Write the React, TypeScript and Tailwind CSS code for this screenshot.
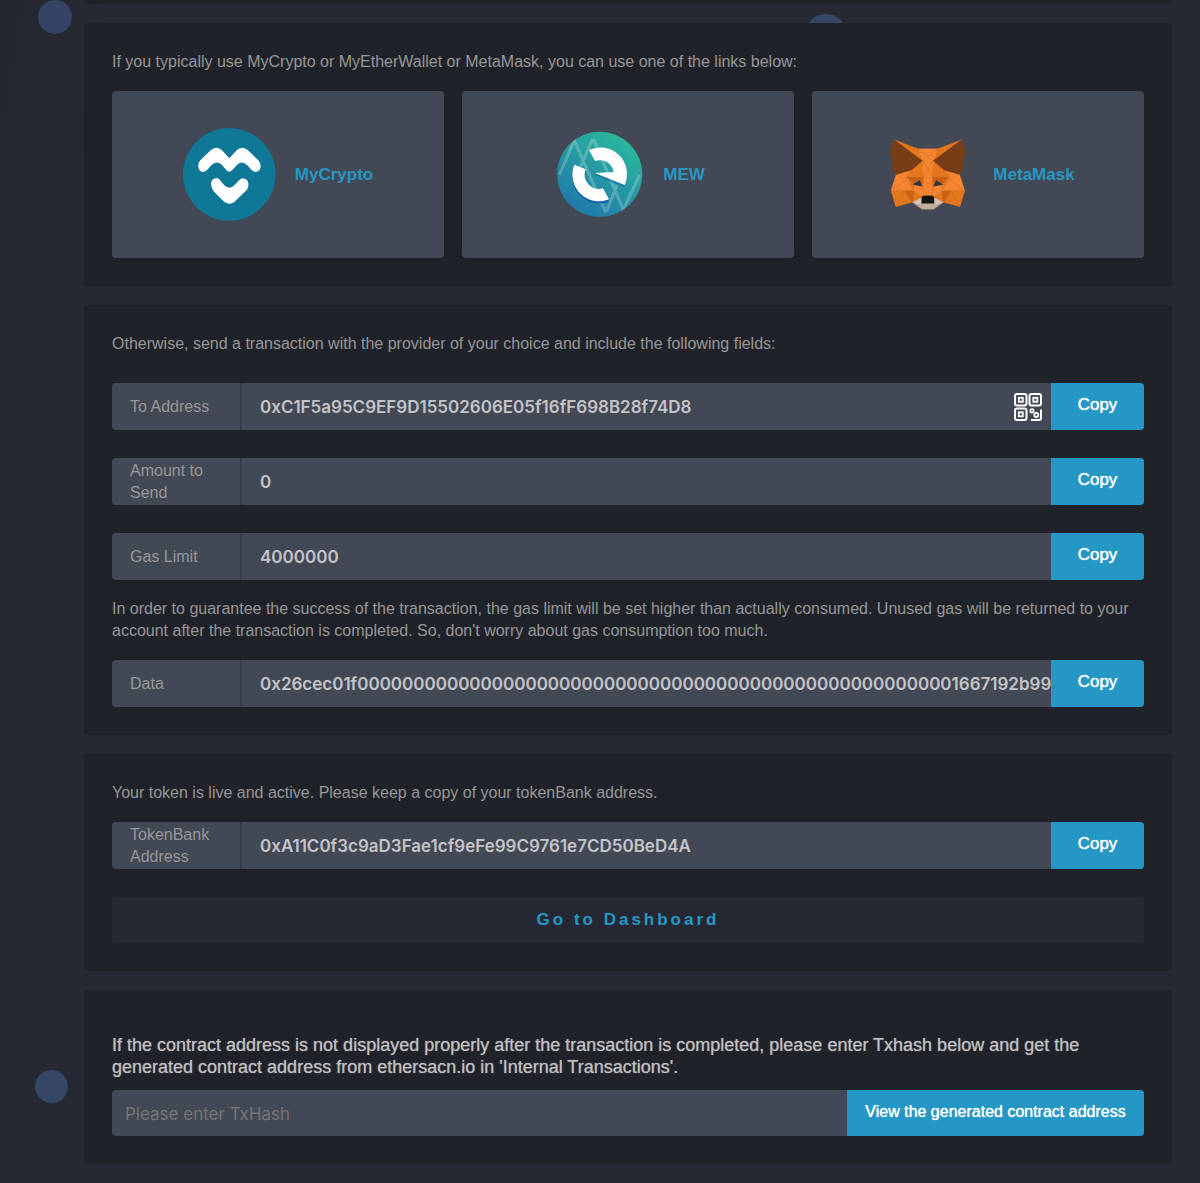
import React from "react";

const TEXT = "text-[16px] leading-[22px] text-[#979797]";

function Card({ children, className = "px-7 py-7" }: { children?: React.ReactNode; className?: string }) {
  return <section className={`relative rounded bg-[#1f2229] ${className}`}>{children}</section>;
}

function MyCryptoLogo() {
  return (
    <svg className="size-[93px] shrink-0" viewBox="61 55 279 279" aria-hidden="true">
      <circle cx="200" cy="194" r="139" fill="#0e7896" />
      <path
        fill="#fff"
        d="M107 170Q106 160 113 152L144 122Q161 107 178 122L200 146L222 122Q239 107 256 122L287 152Q294 160 294 170C293 189 275 190 267 181L254 167Q239 152 225 164L209 181Q200 192 191 181L176 164Q161 152 146 167L133 181C122 192 107 186 107 170Z"
      />
      <path
        fill="#fff"
        d="M145 220C148 204 164 203 171 210L184 226Q200 242 216 226L230 211C240 202 256 207 257 222Q258 236 249 244L215 277Q200 288 185 277L152 244Q145 234 145 220Z"
      />
    </svg>
  );
}

function MewLogo() {
  const top = "M147 121A80 80 0 0 1 254 226L165 190L221 187A42 42 0 0 0 165 154Z";
  const bottom = "M103 165A80 80 0 0 0 207 269L189 236A43 43 0 0 1 137 179Z";
  return (
    <svg className="size-[93px] shrink-0" viewBox="33 55 279 279" aria-hidden="true">
      <defs>
        <linearGradient id="mewFill" x1="0.2" y1="0.95" x2="0.75" y2="0.1">
          <stop offset="0" stopColor="#2276ac" />
          <stop offset="1" stopColor="#29b59c" />
        </linearGradient>
        <clipPath id="mewClip">
          <circle cx="179" cy="194" r="128" />
        </clipPath>
      </defs>
      <circle cx="179" cy="194" r="128" fill="url(#mewFill)" />
      <g clipPath="url(#mewClip)">
        <path
          d="M58 196L103 92L195 303H200L232 225M120 175L156 92H162L250 300L299 196"
          fill="none"
          stroke="#fff"
          strokeOpacity="0.22"
          strokeWidth="9"
        />
      </g>
      <path d={bottom} fill="#1d62ab" transform="translate(0 7)" />
      <path d="M165 190L254 226L250 233L165 196Z" fill="#1d62ab" fillOpacity="0.5" />
      <path d={top} fill="#fff" />
      <path d={bottom} fill="#fff" />
    </svg>
  );
}

const FOX: [string, string[]][] = [
  ["#e2761b", ["274.1,35.5 174.6,109.4 193,65.8"]],
  [
    "#e4761b",
    [
      "44.4,35.5 143.1,110.1 125.6,65.8",
      "238.3,206.8 211.8,247.4 268.5,263 284.8,207.7",
      "33.9,207.7 50.1,263 106.8,247.4 80.3,206.8",
      "103.6,138.2 87.8,162.1 144.1,164.6 142.1,104.1",
      "214.9,138.2 175.9,103.4 174.6,164.6 230.8,162.1",
      "106.8,247.4 140.6,230.9 111.4,208.1",
      "177.9,230.9 211.8,247.4 207.1,208.1",
    ],
  ],
  [
    "#d7c1b3",
    [
      "211.8,247.4 177.9,230.9 180.6,253 180.3,262.3",
      "106.8,247.4 138.3,262.3 138.1,253 140.6,230.9",
    ],
  ],
  [
    "#cd6116",
    [
      "106.8,247.4 111.6,206.8 80.3,207.7",
      "207,206.8 211.8,247.4 238.3,207.7",
      "230.8,162.1 174.6,164.6 179.8,193.5 188.1,176.1 208.1,185.2",
      "110.6,185.2 130.6,176.1 138.8,193.5 144.1,164.6 87.8,162.1",
    ],
  ],
  [
    "#e4751f",
    [
      "87.8,162.1 111.4,208.1 110.6,185.2",
      "208.1,185.2 207.1,208.1 230.8,162.1",
      "144.1,164.6 138.8,193.5 145.4,227.6 146.9,182.7",
      "174.6,164.6 171.9,182.6 173.1,227.6 179.8,193.5",
    ],
  ],
  [
    "#f58530",
    [
      "179.8,193.5 173.1,227.6 177.9,230.9 207.1,208.1 208.1,185.2",
      "110.6,185.2 111.4,208.1 140.6,230.9 145.4,227.6 138.8,193.5",
      "267.2,153.5 214.9,138.2 230.8,162.1 207.1,208.1 238.3,207.7 284.8,207.7",
      "103.6,138.2 51.3,153.5 33.9,207.7 80.3,207.7 111.4,208.1 87.8,162.1",
      "174.6,164.6 177.9,106.9 193.1,65.8 125.6,65.8 140.6,106.9 144.1,164.6 145.3,182.8 145.4,227.6 173.1,227.6 173.3,182.8",
    ],
  ],
  [
    "#c0ad9e",
    [
      "180.3,262.3 180.6,253 178.1,250.8 140.4,250.8 138.1,253 138.3,262.3 106.8,247.4 117.8,256.4 140.1,271.9 178.4,271.9 200.8,256.4 211.8,247.4",
    ],
  ],
  ["#161616", ["179.9,229 173.1,226 145.4,226 138.6,229 138.1,251 180.6,251"]],
  [
    "#763d16",
    [
      "278.3,114.2 286.8,73.4 274.1,35.5 177.9,106.9 214.9,138.2 267.2,153.5 278.8,140 273.8,136.4 281.8,129.1 275.6,124.3 283.6,118.2",
      "31.8,73.4 40.3,114.2 34.9,118.2 42.9,124.3 36.8,129.1 44.8,136.4 39.8,140 51.3,153.5 103.6,138.2 140.6,106.9 44.4,35.5",
    ],
  ],
  [
    "#233447",
    ["138.8,193.5 108.6,187.2 131.5,174.1", "179.7,193.5 187,174.1 210,187.2"],
  ],
];

const FOX_FACETS =
  "M33.9 207.7L86 172L111 208M86 172L90 143M86 172L51 154M284.8 207.7L232 172L207 208M232 172L228 143M232 172L267 154M50 263L80 207M268 263L238 207M143 107L159 130L175 107M159 130L144 165M159 130L175 165M126 66L175 107M193 66L143 107M144 165H175M147 183H172M32 73L88 76L103 138M88 76L40 114M287 73L230 76L215 138M230 76L278 114";

function MetaMaskLogo() {
  return (
    <svg className="size-[93px] shrink-0" viewBox="0 -4.5 316 316" aria-hidden="true">
      {FOX.map(([fill, shapes]) =>
        shapes.map((points) => (
          <polygon key={points} points={points} fill={fill} stroke={fill} strokeWidth="1" strokeLinejoin="round" />
        )),
      )}
      <path d={FOX_FACETS} fill="none" stroke="#8a4510" strokeOpacity="0.3" strokeWidth="2" />
    </svg>
  );
}

function QrIcon() {
  return (
    <svg className="size-7" viewBox="0 0 28 28" fill="none" stroke="#fff" strokeWidth="2" aria-hidden="true">
      <rect x="1" y="1" width="11.5" height="11.5" rx="2" />
      <rect x="15.5" y="1" width="11.5" height="11.5" rx="2" />
      <rect x="1" y="15.5" width="11.5" height="11.5" rx="2" />
      <rect x="4.8" y="4.8" width="4" height="4" strokeWidth="1.8" />
      <rect x="19.3" y="4.8" width="4" height="4" strokeWidth="1.8" />
      <rect x="4.8" y="19.3" width="4" height="4" strokeWidth="1.8" />
      <circle cx="18" cy="17.8" r="1.7" strokeWidth="1.7" />
      <circle cx="22.3" cy="22" r="2" strokeWidth="1.8" />
      <path d="M27 16.5V25Q27 27 25 27H17" />
    </svg>
  );
}

function WalletLink({ name, logo }: { name: string; logo: React.ReactNode }) {
  return (
    <a
      href="#"
      className="flex h-[167px] flex-1 items-center justify-center gap-[19px] rounded bg-[#434855] text-[17px] font-bold text-[#2597c4]"
    >
      {logo}
      {name}
    </a>
  );
}

function Field({ id, label, value, qr }: { id: string; label: string; value: string; qr?: boolean }) {
  return (
    <div className="flex h-[47px] overflow-hidden rounded bg-[#434855]">
      <label
        htmlFor={id}
        className="flex w-[130px] shrink-0 items-center border-r-2 border-[#383c48] pr-4 pl-[18px] text-[16px] leading-[22px] text-[#979797]"
      >
        {label}
      </label>
      <input
        id={id}
        readOnly
        value={value}
        className="min-w-0 flex-1 bg-transparent pt-0.5 pl-[18px] font-['Inter'] text-[17px] font-semibold text-[#c3c4c8] outline-none"
      />
      {qr && (
        <button type="button" aria-label="Show QR code" className="mr-[9px] shrink-0">
          <QrIcon />
        </button>
      )}
      <button
        type="button"
        className="w-[93px] shrink-0 bg-[#2597c4] pb-1 text-[17px] text-white [text-shadow:0_0_1px_#fff]"
      >
        Copy
      </button>
    </div>
  );
}

const DATA = "0x26cec01f" + "0".repeat(53) + "1667192b99a0";

export default function App() {
  return (
    <div className="relative min-h-screen overflow-hidden bg-[#262833] bg-linear-[100deg,#24282e_0%,#262833_8%,#262833_100%] pr-7 pb-[19px] pl-[84px] font-['Liberation_Sans',Arial,sans-serif]">
      <div className="absolute top-0 left-[38px] size-[34px] rounded-full bg-[#364263]" />
      <div className="absolute top-[14px] left-[805px] size-[42px] rounded-full bg-[#364766]" />
      <div className="absolute top-[1070px] left-[35px] size-[33px] rounded-full bg-[#364766]" />

      <main className="flex flex-col gap-[19px]">
        <Card className="h-1 rounded-t-none" />

        <Card>
          <p className={TEXT}>
            If you typically use MyCrypto or MyEtherWallet or MetaMask, you can use one of the links below:
          </p>
          <nav className="mt-[18px] flex gap-[18px]">
            <WalletLink name="MyCrypto" logo={<MyCryptoLogo />} />
            <WalletLink name="MEW" logo={<MewLogo />} />
            <WalletLink name="MetaMask" logo={<MetaMaskLogo />} />
          </nav>
        </Card>

        <Card>
          <p className={TEXT}>
            Otherwise, send a transaction with the provider of your choice and include the following fields:
          </p>
          <div className="mt-7 flex flex-col gap-7">
            <Field id="to" label="To Address" value="0xC1F5a95C9EF9D15502606E05f16fF698B28f74D8" qr />
            <Field id="amount" label="Amount to Send" value="0" />
            <Field id="gas" label="Gas Limit" value="4000000" />
          </div>
          <p className={`my-[18px] ${TEXT}`}>
            In order to guarantee the success of the transaction, the gas limit will be set higher than actually
            consumed. Unused gas will be returned to your account after the transaction is completed. So, don't worry
            about gas consumption too much.
          </p>
          <Field id="data" label="Data" value={DATA} />
        </Card>

        <Card>
          <p className={`mb-[18px] ${TEXT}`}>
            Your token is live and active. Please keep a copy of your tokenBank address.
          </p>
          <Field id="bank" label="TokenBank Address" value="0xA11C0f3c9aD3Fae1cf9eFe99C9761e7CD50BeD4A" />
          <button
            type="button"
            className="mt-7 h-[46px] w-full rounded bg-[#252832] text-[17px] font-bold tracking-[3px] text-[#2597c4]"
          >
            Go to Dashboard
          </button>
        </Card>

        <Card className="px-7 pt-11 pb-7">
          <label
            htmlFor="txhash"
            className="block text-[18px] leading-[22px] text-[#c0c0c0] [text-shadow:0_0_1px_#9a9a9a]"
          >
            If the contract address is not displayed properly after the transaction is completed, please enter Txhash
            below and get the generated contract address from ethersacn.io in 'Internal Transactions'.
          </label>
          <div className="mt-3 flex h-[46px] overflow-hidden rounded bg-[#434855]">
            <input
              id="txhash"
              type="text"
              placeholder="Please enter TxHash"
              className="min-w-0 flex-1 bg-transparent px-[13px] pt-1 font-['Inter'] text-[17px] text-white outline-none placeholder:text-[#757575]"
            />
            <button
              type="button"
              className="w-[297px] shrink-0 bg-[#2597c4] pb-0.5 text-[16px] text-white [text-shadow:0_0_1px_#fff]"
            >
              View the generated contract address
            </button>
          </div>
        </Card>
      </main>
    </div>
  );
}
